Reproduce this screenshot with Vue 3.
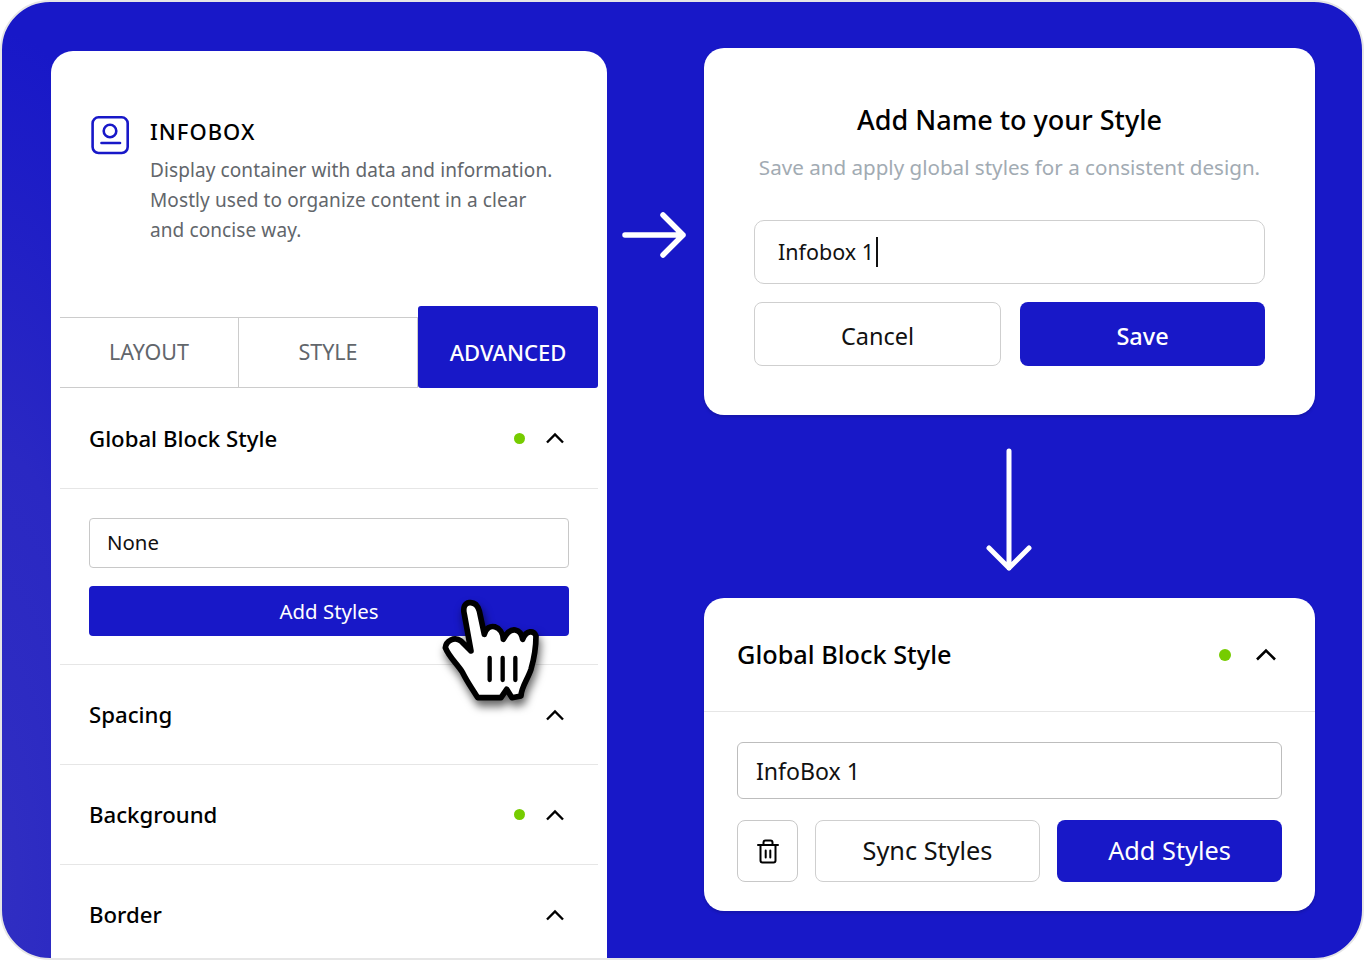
<template>
  <div class="frame">
    <!-- left settings panel -->
    <section class="panel">
      <header class="panel-head">
        <svg class="box-icon" width="40" height="40" viewBox="0 0 40 40" fill="none" stroke="#1818c8" stroke-width="2.6">
          <rect x="2.600" y="2.300" width="35.100" height="35.700" rx="6" />
          <circle cx="20" cy="16" r="6.300" />
          <path d="M11.500 28h18.500" stroke-linecap="round" />
        </svg>
        <div>
          <h1 class="head-title">INFOBOX</h1>
          <p class="head-desc">Display container with data and information. Mostly used to organize content in a clear and concise way.</p>
        </div>
      </header>

      <div class="inner">
        <nav class="tabs">
          <div class="tab">LAYOUT</div>
          <div class="tab">STYLE</div>
          <div class="tab tab-active">ADVANCED</div>
        </nav>

        <div class="acc-row acc-first">
          <span class="acc-title">Global Block Style</span>
          <span class="dot"></span>
          <svg class="chev" width="20" height="12" viewBox="0 0 20 12" fill="none" stroke="#000" stroke-width="2.4"><path d="M2 10.500l8-8 8 8" /></svg>
        </div>
        <div class="acc-body">
          <div class="field">None</div>
          <div class="add-btn">Add Styles</div>
        </div>
        <div v-for="row in rows" :key="row.name" class="acc-row">
          <span class="acc-title">{{ row.name }}</span>
          <span v-if="row.active" class="dot"></span>
          <svg class="chev" width="20" height="12" viewBox="0 0 20 12" fill="none" stroke="#000" stroke-width="2.4"><path d="M2 10.500l8-8 8 8" /></svg>
        </div>
      </div>

      <!-- cursor on top of the button -->
      <svg class="hand" width="104" height="110" viewBox="60 50 310 330">
        <path
          d="M150 70C136 72 130 84 135 105L155 215L125 185C105 170 80 185 78 205C90 235 115 255 130 280C145 310 160 330 175 355L245 355L262 330L278 355L305 350C305 325 325 300 335 270C345 235 350 200 350 170C345 152 320 152 310 180C305 150 275 135 252 180C250 140 205 125 195 165L180 95C175 78 165 68 150 70Z"
          fill="#fff" stroke="#000" stroke-width="17" stroke-linejoin="round"
        />
        <path d="M211 236v66M250 236v66M288 236v66" fill="none" stroke="#000" stroke-width="13" stroke-linecap="round" />
      </svg>
    </section>

    <div class="gutter">
      <svg class="arrow-right" width="66" height="48" viewBox="0 0 66 48" fill="none" stroke="#fff" stroke-width="5.500" stroke-linecap="round" stroke-linejoin="round">
        <path d="M3 24h58M41 4l20 20-20 20" />
      </svg>
    </div>

    <div class="right">
      <section class="card name-card">
        <h2 class="name-title">Add Name to your Style</h2>
        <p class="name-sub">Save and apply global styles for a consistent design.</p>
        <div class="name-input">Infobox 1<span class="caret"></span></div>
        <div class="name-actions">
          <div class="btn-line">Cancel</div>
          <div class="btn-solid">Save</div>
        </div>
      </section>

      <div class="down-wrap">
        <svg width="48" height="124" viewBox="0 0 48 124" fill="none" stroke="#fff" stroke-width="5" stroke-linecap="round" stroke-linejoin="round">
          <path d="M24 3v117M4 100l20 20 20-20" />
        </svg>
      </div>

      <section class="card style-card">
        <div class="style-head">
          <span class="style-title">Global Block Style</span>
          <span class="dot dot-big"></span>
          <svg class="style-chev" width="22" height="13" viewBox="0 0 22 13" fill="none" stroke="#000" stroke-width="2.6"><path d="M2 11.500l9-9 9 9" /></svg>
        </div>
        <div class="style-body">
          <div class="style-input">InfoBox 1</div>
          <div class="style-actions">
            <div class="trash">
              <svg width="22" height="25" viewBox="0 0 22 25" fill="none" stroke="#000" stroke-width="2" stroke-linecap="round" stroke-linejoin="round">
                <path d="M1 6h20M3.500 6v15.500a2 2 0 0 0 2 2h11a2 2 0 0 0 2-2V6M6.500 6V3.500a2 2 0 0 1 2-2h5a2 2 0 0 1 2 2V6M8.700 11.500v7M13.300 11.500v7" />
              </svg>
            </div>
            <div class="btn-line sync">Sync Styles</div>
            <div class="btn-solid add">Add Styles</div>
          </div>
        </div>
      </section>
    </div>
  </div>
</template>

<script setup>
const rows = [
  { name: 'Spacing', active: false },
  { name: 'Background', active: true },
  { name: 'Border', active: false },
];
</script>

<style>
html,
body {
  margin: 0;
  background: #fff;
}
</style>

<style scoped>
.frame {
  width: 1364px;
  height: 960px;
  box-sizing: border-box;
  border: 2px solid #e6e6e6;
  border-radius: 50px;
  overflow: hidden;
  display: flex;
  padding-left: 49px;
  background: radial-gradient(ellipse 200px 850px at 0% 92%, #302ec2 0%, #2a28c3 50%, #1818c8 100%) #1818c8;
  font-family: 'Noto Sans', 'Open Sans', sans-serif;
  color: #111;
}

/* left panel */
.panel {
  position: relative;
  width: 556px;
  margin-top: 49px;
  background: #fff;
  border-radius: 22px 22px 0 0;
}

.panel-head {
  display: flex;
  gap: 20px;
  padding: 64px 47px 0 39px;
  height: 255px;
  box-sizing: border-box;
}

.box-icon {
  flex: none;
}

.head-title {
  margin: 0 0 8px;
  font-size: 22px;
  line-height: 32px;
  font-weight: 500;
  letter-spacing: 1px;
  color: #000;
}

.head-desc {
  margin: 0;
  font-size: 19px;
  line-height: 30px;
  letter-spacing: 0.1px;
  color: #62666b;
}

.inner {
  margin: 0 9px;
}

.tabs {
  display: flex;
  height: 82px;
  align-items: flex-end;
}

.tab {
  flex: 0 0 179px;
  height: 71px;
  box-sizing: border-box;
  padding-bottom: 3px;
  border-top: 1px solid #ccc;
  border-bottom: 1px solid #ccc;
  border-right: 1px solid #ccc;
  display: flex;
  align-items: center;
  justify-content: center;
  font-size: 21.500px;
  color: #62666b;
}

.tab-active {
  flex: 0 0 180px;
  height: 82px;
  padding: 9px 0 0;
  border: none;
  border-radius: 3px;
  background: #1818c8;
  color: #fff;
  font-size: 22px;
  font-weight: 500;
}

.acc-row {
  height: 100px;
  box-sizing: border-box;
  display: flex;
  align-items: center;
  padding: 0 33px 0 29px;
  border-bottom: 1px solid #e6e6e6;
}

.acc-first {
  height: 101px;
}

.acc-title {
  flex: 1;
  margin-bottom: 1px;
  font-size: 22.200px;
  font-weight: 500;
  color: #000;
}

.acc-first .acc-title {
  margin-bottom: 0;
}

.dot {
  width: 11px;
  height: 11px;
  border-radius: 50%;
  background: #76cc00;
  margin-right: 20px;
}

.chev {
  flex: none;
}

.acc-body {
  padding: 29px 29px 28px;
  border-bottom: 1px solid #e6e6e6;
  display: flex;
  flex-direction: column;
  gap: 18px;
}

.field {
  height: 50px;
  box-sizing: border-box;
  display: flex;
  align-items: center;
  padding: 0 17px 2px;
  border: 1px solid #c8c8c8;
  border-radius: 4px;
  font-size: 20.400px;
}

.add-btn {
  height: 50px;
  display: flex;
  align-items: center;
  justify-content: center;
  background: #1818c8;
  border-radius: 4px;
  color: #fff;
  font-size: 20.400px;
}

.hand {
  position: absolute;
  left: 388px;
  top: 545px;
  filter: drop-shadow(2px 6px 4px rgba(0, 0, 0, 0.6));
}

/* arrow between the panel and the cards */
.gutter {
  width: 97px;
  flex: none;
  box-sizing: border-box;
  padding: 209px 0 0 15px;
}

.arrow-right {
  display: block;
}

/* right column */
.right {
  width: 611px;
  flex: none;
  padding-top: 46px;
}

.card {
  background: #fff;
  border-radius: 20px;
  box-shadow: 0 2px 3px rgba(0, 0, 0, 0.15);
}

.name-card {
  height: 367px;
  box-sizing: border-box;
  padding: 52px 50px 0;
  text-align: center;
}

.name-title {
  margin: 0;
  font-size: 27px;
  line-height: 40px;
  font-weight: 500;
  color: #000;
}

.name-sub {
  margin: 12px -10px 0;
  font-size: 20.600px;
  line-height: 30px;
  color: #a2abb3;
  white-space: nowrap;
}

.name-input {
  margin-top: 38px;
  height: 64px;
  box-sizing: border-box;
  border: 1px solid #cfcfcf;
  border-radius: 10px;
  display: flex;
  align-items: center;
  padding: 0 0 2px 23px;
  font-size: 21.500px;
}

.caret {
  width: 2px;
  height: 30px;
  background: #111;
  margin: 2px 0 0 2px;
}

.name-actions {
  display: flex;
  gap: 19px;
  margin-top: 18px;
}

.btn-line,
.btn-solid {
  flex: 1;
  height: 64px;
  box-sizing: border-box;
  display: flex;
  align-items: center;
  justify-content: center;
  padding-top: 4px;
  border-radius: 8px;
  font-size: 23.500px;
}

.btn-line {
  border: 1px solid #cfcfcf;
}

.btn-solid {
  background: #1818c8;
  color: #fff;
  font-weight: 500;
}

.down-wrap {
  height: 183px;
  display: flex;
  justify-content: center;
  padding: 33px 1px 0 0;
  box-sizing: border-box;
}

.style-card {
  height: 313px;
}

.style-head {
  height: 114px;
  box-sizing: border-box;
  display: flex;
  align-items: center;
  padding: 0 38px 0 33px;
  border-bottom: 1px solid #e6e6e6;
}

.style-title {
  flex: 1;
  margin-bottom: 2px;
  font-size: 25.300px;
  font-weight: 500;
  color: #000;
}

.dot-big {
  width: 12px;
  height: 12px;
  margin-right: 24px;
}

.style-body {
  padding: 30px 33px 0;
}

.style-input {
  height: 57px;
  box-sizing: border-box;
  border: 1px solid #bdbdbd;
  border-radius: 6px;
  display: flex;
  align-items: center;
  padding-left: 18px;
  font-size: 23.100px;
}

.style-actions {
  display: flex;
  gap: 17px;
  margin-top: 21px;
}

.trash {
  width: 61px;
  height: 62px;
  box-sizing: border-box;
  border: 1px solid #c8c8c8;
  border-radius: 8px;
  display: flex;
  align-items: center;
  justify-content: center;
}

.sync,
.add {
  height: 62px;
  flex: none;
  width: 225px;
  padding: 0 0 3px;
  font-size: 25.300px;
  font-weight: 400;
}
</style>
